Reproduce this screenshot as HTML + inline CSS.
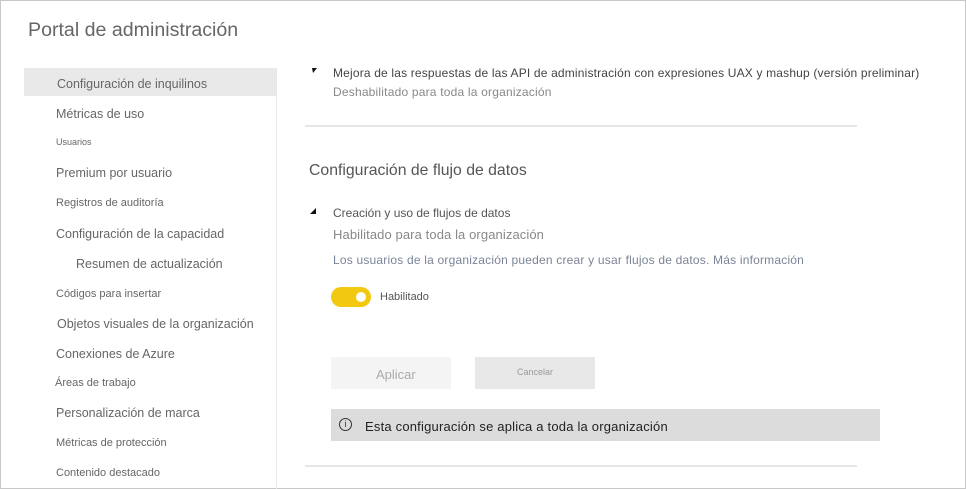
<!DOCTYPE html><html><head><style>
body{margin:0;width:966px;height:489px;overflow:hidden;background:#fff;font-family:"Liberation Sans",sans-serif;position:relative}
.frame{position:absolute;left:0;top:0;width:964px;height:487px;border:1px solid #c8c8c8}
.t{position:absolute;white-space:nowrap;line-height:1}
.side{position:absolute;left:24px;top:68px;width:252px;height:421px;border-right:1px solid #e6e6e6}
.s{font-size:12.5px;color:#666}
.ss{font-size:11px;color:#666}
</style></head><body>
<div class="frame"></div>
<div class="t" style="left:28px;top:21px;font-size:19.6px;color:#666">Portal de administración</div>
<div class="side"></div>
<div style="position:absolute;left:24px;top:68px;width:252px;height:28px;background:#e9e9e9"></div>
<div class="t s" style="left:57px;top:78px">Configuración de inquilinos</div>
<div class="t s" style="left:56px;top:108px">Métricas de uso</div>
<div class="t" style="left:56px;top:138px;font-size:9px;color:#666">Usuarios</div>
<div class="t s" style="left:56px;top:167px">Premium por usuario</div>
<div class="t ss" style="left:56px;top:198px">Registros de auditoría</div>
<div class="t s" style="left:56px;top:228px">Configuración de la capacidad</div>
<div class="t s" style="left:76px;top:258px">Resumen de actualización</div>
<div class="t ss" style="left:56px;top:289px">Códigos para insertar</div>
<div class="t s" style="left:57px;top:318px">Objetos visuales de la organización</div>
<div class="t s" style="left:56px;top:348px">Conexiones de Azure</div>
<div class="t ss" style="left:55px;top:378px">Áreas de trabajo</div>
<div class="t s" style="left:56px;top:407px">Personalización de marca</div>
<div class="t ss" style="left:56px;top:438px">Métricas de protección</div>
<div class="t ss" style="left:56px;top:468px">Contenido destacado</div>

<svg style="position:absolute;left:312px;top:68px" width="6" height="7"><path d="M0 0L5 0L1 5Z" fill="#111"/></svg>
<div class="t" style="left:333px;top:67px;font-size:12px;color:#444;letter-spacing:0.17px">Mejora de las respuestas de las API de administración con expresiones UAX y mashup (versión preliminar)</div>
<div class="t" style="left:333px;top:86px;font-size:12px;color:#888;letter-spacing:0.2px">Deshabilitado para toda la organización</div>
<div style="position:absolute;left:305px;top:125px;width:552px;height:2px;background:#e6e6e6"></div>
<div class="t" style="left:309px;top:163px;font-size:15.8px;color:#555">Configuración de flujo de datos</div>
<svg style="position:absolute;left:310px;top:208px" width="7" height="7"><path d="M6 0L6 6L0 6Z" fill="#111"/></svg>
<div class="t" style="left:333px;top:207px;font-size:12px;color:#555">Creación y uso de flujos de datos</div>
<div class="t" style="left:333px;top:228px;font-size:13px;color:#888;letter-spacing:0.1px">Habilitado para toda la organización</div>
<div class="t" style="left:333px;top:254px;font-size:12px;color:#7a8496;letter-spacing:0.2px">Los usuarios de la organización pueden crear y usar flujos de datos. Más información</div>
<div style="position:absolute;left:331px;top:287px;width:40px;height:20px;border-radius:10px;background:#f2c811"></div>
<div style="position:absolute;left:356px;top:292px;width:10px;height:10px;border-radius:5px;background:#fff"></div>
<div class="t" style="left:380px;top:292px;font-size:11px;color:#555">Habilitado</div>
<div style="position:absolute;left:331px;top:357px;width:120px;height:32px;background:#f4f4f4"></div>
<div class="t" style="left:376px;top:368px;font-size:13px;color:#aaa">Aplicar</div>
<div style="position:absolute;left:475px;top:357px;width:120px;height:32px;background:#e8e8e8"></div>
<div class="t" style="left:517px;top:368px;font-size:9px;color:#999">Cancelar</div>
<div style="position:absolute;left:331px;top:409px;width:549px;height:32px;background:#dcdcdc"></div>
<div style="position:absolute;left:339px;top:418px;width:11px;height:11px;border:1px solid #333;border-radius:50%;font-size:9px;line-height:11px;text-align:center;color:#333">i</div>
<div class="t" style="left:365px;top:420px;font-size:13px;color:#222;letter-spacing:0.2px">Esta configuración se aplica a toda la organización</div>
<div style="position:absolute;left:305px;top:465px;width:552px;height:2px;background:#e6e6e6"></div>
</body></html>
